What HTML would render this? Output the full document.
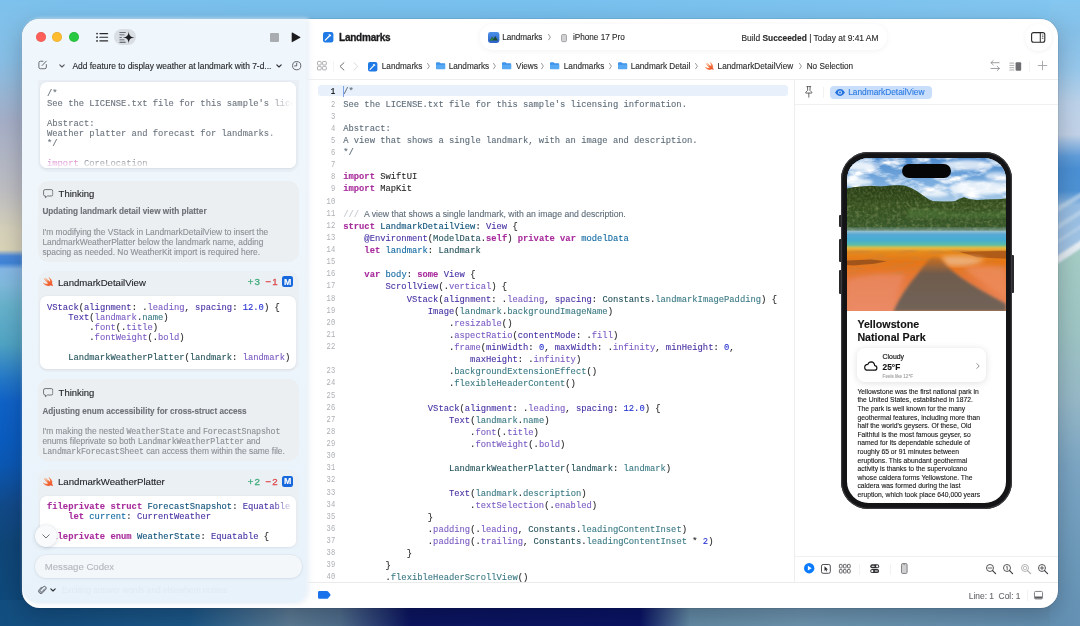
<!DOCTYPE html>
<html>
<head>
<meta charset="utf-8">
<title>Xcode</title>
<style>
*{box-sizing:border-box;margin:0;padding:0}
html,body{width:1080px;height:626px;overflow:hidden;background:#6aa0c8}
body{position:relative;font-family:"Liberation Sans",sans-serif;color:#1d1d1f;font-size:8.3px}
.a{position:absolute}
.t{position:absolute;white-space:pre;line-height:12px;-webkit-text-stroke:.12px}
.m{font-family:"Liberation Mono",monospace}
svg{position:absolute;overflow:visible}
/* wallpaper */
#bg{left:0;top:0;width:1080px;height:626px;
 background:
  linear-gradient(to right, rgba(18,78,128,1) 0px, rgba(28,88,136,1) 190px, rgba(92,124,148,1) 290px, rgba(80,110,140,1) 340px, rgba(12,22,96,1) 410px, rgba(10,20,100,1) 640px, rgba(100,140,165,1) 690px, rgba(110,150,175,1) 800px, rgba(98,143,176,1) 1080px) 0 600px/1080px 26px no-repeat,
  linear-gradient(to bottom, #7cc1ec 0px, #88bfe6 60px, #a5afc8 120px, #bebec3 190px, #d6d1ba 230px, #d9d3b8 250px, #4a88da 256px, #3f84d8 263px, #86b8e6 269px, #7fb9dc 285px, #68b2cc 305px, #50a4c4 344px, #2478c8 379px, #1062c8 402px, #0a5cc0 440px, #0b58b4 465px, #124a8a 505px, #0f4678 545px, #0e4a7c 626px) 0 0/30px 626px no-repeat,
  linear-gradient(to right, #7cc1ec 0px, #78c0ee 540px, #82c6f0 1080px) 0 0/1080px 30px no-repeat;
}
#win{left:22px;top:18.5px;width:1036px;height:589px;border-radius:17.5px;background:#fff;box-shadow:0 0 0 0.5px rgba(0,0,0,.12),0 8px 24px rgba(0,0,20,.25)}
#side{left:22px;top:18.5px;width:284px;height:584.5px;border-radius:17.5px 0 13px 16px;background:linear-gradient(to bottom,#f0f7fc 0,#eef6fc 40%,#e8f2fa 100%);box-shadow:2px 0 4px #eaf2f9, 3px 1px 7px rgba(120,150,180,.10)}
.hl{background:#e6e6e6}
.vl{background:#e6e6e6}
.card{border-radius:9px}
.jb{top:61.1px;font-size:8.2px;color:#2c2c2e}
.jc{top:62.9px;width:3px;height:6.4px}
.fo{top:62.3px;width:9.4px;height:7.6px}
.sw{width:9px;height:8.2px}
pre.sc{position:absolute;-webkit-text-stroke:.1px;font-size:8.82px;line-height:10.05px;white-space:pre;color:#262626}
pre i,pre b{font-style:normal}
.tb{width:10.4px;height:9.5px;margin-top:.7px}
.th{font-size:8.4px;line-height:10px;color:#8d9095}
.tm{font-size:8.3px;letter-spacing:-.15px;line-height:1px}
.k{color:#a82b9c;font-weight:bold}
.p1{color:#4631a3}.p2{color:#7a5ac3}.g1{color:#23525a}.g2{color:#3a7a84}.n{color:#2430d0}.d1{color:#0b4f79}.d2{color:#0f68a0}.c{color:#5d6c79}
pre.ln{left:313px;top:86.45px;width:22.2px;text-align:right;font-size:8.5px;line-height:12.125px;color:#adafb3;transform:scaleX(.84);transform-origin:right center}
pre.ln .cur{color:#1d1d1f;font-size:8.8px;font-weight:bold}
pre.cd{-webkit-text-stroke:.1px;left:343.2px;top:86.45px;font-size:8.82px;line-height:12.125px;color:#262626;white-space:pre}
.dc{font-family:"Liberation Sans",sans-serif;font-size:8.7px;color:#5d6c79;padding-left:3px}
.zm{top:563.8px;width:10.4px;height:10.4px}
</style>
</head>
<body>
<div id="root" style="position:absolute;left:0;top:0;width:1080px;height:626px;will-change:transform">
<div id="bg" class="a"></div>
<svg style="left:1050px;top:0" width="30" height="626" viewBox="0 0 30 626">
<defs><linearGradient id="rg" gradientUnits="userSpaceOnUse" x1="0" y1="0" x2="0" y2="626"><stop offset="0" stop-color="#84c7f0"/><stop offset=".05" stop-color="#86c0e8"/><stop offset=".11" stop-color="#97c8ec"/><stop offset=".165" stop-color="#bdd3ea"/><stop offset=".215" stop-color="#c3d3e8"/><stop offset=".25" stop-color="#5f9dda"/><stop offset=".27" stop-color="#4b90d5"/><stop offset=".305" stop-color="#4e93d6"/><stop offset=".328" stop-color="#96bde3"/><stop offset=".4" stop-color="#a4c6e6"/><stop offset="1" stop-color="#a4c6e6"/></linearGradient>
<linearGradient id="rt" gradientUnits="userSpaceOnUse" x1="0" y1="250" x2="0" y2="626"><stop offset="0" stop-color="#a6cdc6"/><stop offset=".2" stop-color="#9fc6c4"/><stop offset=".4" stop-color="#96b9c8"/><stop offset=".58" stop-color="#7ba6c4"/><stop offset=".8" stop-color="#6e9bbb"/><stop offset="1" stop-color="#6491b4"/></linearGradient>
<filter id="rb"><feGaussianBlur stdDeviation="2.2"/></filter><filter id="rb2"><feGaussianBlur stdDeviation=".8"/></filter></defs>
<rect width="30" height="626" fill="url(#rg)"/>
<polygon points="-5,214 35,190 35,195 -5,220" fill="#d2e3f1" opacity=".55" filter="url(#rb2)"/>
<polygon points="-5,232 35,207 35,212 -5,238" fill="#d2e3f1" opacity=".5" filter="url(#rb2)"/>
<polygon points="-5,248 35,222 35,226 -5,252" fill="#d2e3f1" opacity=".4" filter="url(#rb2)"/>
<polygon points="0,268 30,248 30,626 0,626" fill="url(#rt)"/>
<polygon points="-2,262 32,239.5 32,247.5 -2,270" fill="#e6eef3" filter="url(#rb2)"/>
</svg>
<div id="win" class="a"></div>
<div id="side" class="a"></div>

<!-- separators -->
<div class="a hl" style="left:308px;top:78.6px;width:750px;height:1px;background:#eeeeee"></div>
<div class="a vl" style="left:794.3px;top:79px;width:1px;height:503px;background:#eeeeee"></div>
<div class="a hl" style="left:795px;top:104px;width:263px;height:1px;background:#f0f0f0"></div>
<div class="a hl" style="left:795px;top:556px;width:263px;height:1px;background:#f0f0f0"></div>
<div class="a hl" style="left:308px;top:581.6px;width:750px;height:1px;background:#ebebeb"></div>

<svg width="0" height="0" style="left:0;top:0"><defs>
<symbol id="fold" viewBox="0 0 10 8"><path d="M0 1.3Q0 .2 1.1 .2H3.4Q4 .2 4.4 .7L5 1.3H8.9Q10 1.3 10 2.4V6.7Q10 7.8 8.9 7.8H1.1Q0 7.8 0 6.7Z" fill="#3d93ea"/><path d="M0 3H10V6.7Q10 7.8 8.9 7.8H1.1Q0 7.8 0 6.7Z" fill="#58a9f3"/></symbol>
<symbol id="swift" viewBox="0 0 10 9"><linearGradient id="sg" x1="0" y1="0" x2="1" y2="1"><stop offset="0" stop-color="#f9a868"/><stop offset=".55" stop-color="#f26b35"/><stop offset="1" stop-color="#ec4a28"/></linearGradient><path d="M5.5 .3C8.1 1.9 9.3 4.5 8.5 6.4C9.2 7.2 9.4 8.1 9.2 8.8C8.6 7.8 7.8 7.7 7.2 8C5 9.2 2 8.4 .2 5.6C1.9 6.8 3.8 7.1 5.2 6.3C3.4 4.9 2 3.1 1 1.5C2.5 2.9 3.9 3.9 5.1 4.6C4.1 3.5 3 2.1 2.4 1C3.9 2.5 5.6 3.9 6.9 4.7C7.2 3.4 6.8 1.8 5.5 .3Z" fill="url(#sg)" stroke="url(#sg)" stroke-width=".35" stroke-linejoin="round"/></symbol>
<symbol id="bub" viewBox="0 0 11 10"><path d="M2.2 .6H8.8Q10.4 .6 10.4 2.2V5.8Q10.4 7.4 8.8 7.4H4.6L2.6 9.3V7.4H2.2Q.6 7.4 .6 5.8V2.2Q.6 .6 2.2 .6Z" fill="none" stroke="#55585e" stroke-width=".85" stroke-linejoin="round"/></symbol>
<symbol id="zo" viewBox="0 0 10.4 10.4"><circle cx="4" cy="4" r="3.5" fill="none" stroke="#3a3a3e" stroke-width=".85"/><path d="M6.6 6.6L9.8 9.8" stroke="#3a3a3e" stroke-width="1.15" stroke-linecap="round"/></symbol>
<symbol id="chv" viewBox="0 0 3 6.4"><path d="M.5 .4 L2.4 3.2 L.5 6" fill="none" stroke="#6c6c70" stroke-width=".7" stroke-linecap="round" stroke-linejoin="round"/></symbol>
</defs></svg>
<!-- traffic lights -->
<div class="a" style="left:35.8px;top:32.3px;width:10px;height:10px;border-radius:50%;background:#fe5f58;box-shadow:inset 0 0 0 .4px rgba(0,0,0,.12)"></div>
<div class="a" style="left:52.2px;top:32.3px;width:10px;height:10px;border-radius:50%;background:#febc2e;box-shadow:inset 0 0 0 .4px rgba(0,0,0,.12)"></div>
<div class="a" style="left:68.6px;top:32.3px;width:10px;height:10px;border-radius:50%;background:#28c840;box-shadow:inset 0 0 0 .4px rgba(0,0,0,.12)"></div>
<!-- list icon -->
<svg style="left:95.6px;top:32px" width="13" height="11" viewBox="0 0 13 11"><g fill="#2a2a2c"><circle cx="1.05" cy="1.6" r=".9"/><circle cx="1.05" cy="5.25" r=".9"/><circle cx="1.05" cy="8.9" r=".9"/><rect x="3.3" y="1" width="8.9" height="1.2" rx=".6"/><rect x="3.3" y="4.65" width="8.9" height="1.2" rx=".6"/><rect x="3.3" y="8.3" width="8.9" height="1.2" rx=".6"/></g></svg>
<!-- sparkle pill -->
<div class="a" style="left:113.6px;top:28.8px;width:22.6px;height:16.6px;border-radius:8.3px;background:#d9dee5"></div>
<svg style="left:113.6px;top:28.8px" width="22.6" height="16.6" viewBox="0 0 22.6 16.6"><g fill="#4a4d54"><rect x="5.30" y="3.20" width="6.50" height=".85" rx=".4"/><rect x="5.30" y="5.50" width="5.30" height=".85" rx=".4"/><rect x="5.30" y="8.00" width="2.70" height=".85" rx=".4"/><rect x="5.30" y="10.50" width="5.30" height=".85" rx=".4"/><rect x="5.30" y="12.80" width="6.50" height=".85" rx=".4"/></g><path d="M14.700000000000017 2.200000000000002 C15.050000000000017 6.560000000000002 16.310000000000016 8.050000000000002 20.600000000000016 8.400000000000002 C16.310000000000016 8.750000000000002 15.050000000000017 10.240000000000002 14.700000000000017 14.600000000000001 C14.350000000000017 10.240000000000002 13.090000000000018 8.750000000000002 8.800000000000017 8.400000000000002 C13.090000000000018 8.050000000000002 14.350000000000017 6.560000000000002 14.700000000000017 2.200000000000002Z" fill="#1e1f23"/></svg>
<!-- stop / play -->
<div class="a" style="left:270px;top:32.6px;width:9px;height:9px;border-radius:1px;background:#a9adb1"></div>
<svg style="left:290.6px;top:31.8px" width="10" height="11" viewBox="0 0 10 11"><path d="M.7 .9 Q.7 .2 1.4 .55 L9.2 4.9 Q9.8 5.3 9.2 5.7 L1.4 10.05 Q.7 10.4 .7 9.7Z" fill="#1c1c1e"/></svg>
<!-- project icon + title -->
<svg style="left:323.4px;top:32.2px" width="10.4" height="10.4" viewBox="0 0 10.4 10.4"><rect width="10.4" height="10.4" rx="2.2" fill="#1f7ae6"/><path d="M2.3 8.1 L6.6 3.8" stroke="#fff" stroke-width="1.3" stroke-linecap="round"/><path d="M5.2 2.6 Q6.8 1.6 8.3 3.6 L7.5 4.4 L6 3z" fill="#fff"/></svg>
<div class="t" style="left:339px;top:31.7px;font-size:10px;letter-spacing:-.22px;font-weight:bold;color:#1a1a1c;-webkit-text-stroke:.3px #1a1a1c">Landmarks</div>
<!-- scheme pill -->
<div class="a" style="left:480px;top:23.8px;width:407px;height:26.6px;border-radius:13.3px;background:#fff;box-shadow:0 1px 6px rgba(0,0,0,.055)"></div>
<svg style="left:487.6px;top:32px" width="11.4" height="11" viewBox="0 0 11.2 10.6"><defs><linearGradient id="ag" x1="0" y1="0" x2="0" y2="1"><stop offset="0" stop-color="#4a90e8"/><stop offset="1" stop-color="#2d63c8"/></linearGradient></defs><rect width="11.2" height="10.6" rx="2.4" fill="url(#ag)"/><path d="M1.6 8.2 L4.2 4.6 L5.6 6.2 L7.2 3.9 L9.8 8.2Z" fill="#1d4a3a"/><path d="M1.6 8.2 L4.2 4.6 L5.6 6.2 L4.6 8.2Z" fill="#2f7d4c"/></svg>
<div class="t" style="left:502.2px;top:32.2px;font-size:8.2px;letter-spacing:-.05px;color:#2a2a2c">Landmarks</div>
<svg class="jc" style="left:547.6px;top:34px"><use href="#chv"/></svg>
<svg style="left:561px;top:33.5px" width="6" height="8.2" viewBox="0 0 6 8.2"><rect x=".5" y=".5" width="5" height="7.2" rx="1.2" fill="#d2d2d5" stroke="#9a9a9e" stroke-width=".85"/></svg>
<div class="t" style="left:572.9px;top:32.2px;font-size:8.2px;color:#2a2a2c">iPhone 17 Pro</div>
<div class="t" id="bs" style="left:741.4px;top:31.8px;font-size:8.41px;color:#2a2a2c">Build <b>Succeeded</b> | Today at 9:41 AM</div>
<!-- inspector toggle -->
<div class="a" style="left:1024.5px;top:24px;width:27px;height:27px;border-radius:50%;background:#fff;box-shadow:0 1px 4px rgba(0,0,0,.06)"></div>
<svg style="left:1031px;top:32.2px" width="14.4" height="10.8" viewBox="0 0 14.4 10.8"><rect x=".6" y=".6" width="13.2" height="9.6" rx="2" fill="none" stroke="#2a2a2c" stroke-width="1.1"/><path d="M9.3 .6V10.2" stroke="#2a2a2c" stroke-width="1"/><path d="M10.9 3h1.5M10.9 4.7h1.5M10.9 6.4h1.5" stroke="#2a2a2c" stroke-width=".7"/></svg>

<!-- sidebar header row -->
<svg style="left:38px;top:60.1px" width="9.6" height="9.6" viewBox="0 0 10 10"><path d="M5.2 1.3H2.6Q.9 1.3 .9 3V7.4Q.9 9.1 2.6 9.1H7Q8.7 9.1 8.7 7.4V4.8" fill="none" stroke="#55575c" stroke-width=".9" stroke-linecap="round"/><path d="M4.3 5.7 L8.6 1.2" stroke="#55575c" stroke-width=".95" stroke-linecap="round"/></svg>
<svg style="left:58.8px;top:64.2px" width="6" height="4" viewBox="0 0 6 4"><path d="M.8 .8 L3 3 L5.2 .8" fill="none" stroke="#55575c" stroke-width="1.15" stroke-linecap="round" stroke-linejoin="round"/></svg>
<div class="t" style="left:72.4px;top:60.1px;font-size:8.44px;color:#26282c">Add feature to display weather at landmark with 7-d...</div>
<svg style="left:276px;top:64.4px" width="6" height="4" viewBox="0 0 6 4"><path d="M.8 .8 L3 3 L5.2 .8" fill="none" stroke="#2e3034" stroke-width="1.15" stroke-linecap="round" stroke-linejoin="round"/></svg>
<svg style="left:291.6px;top:60.9px" width="9.4" height="9.4" viewBox="0 0 9.4 9.4"><circle cx="4.7" cy="4.7" r="4.1" fill="none" stroke="#55575c" stroke-width=".9"/><path d="M4.7 2.2V4.9H2.6" fill="none" stroke="#55575c" stroke-width=".9" stroke-linecap="round" stroke-linejoin="round"/></svg>

<!-- jump bar -->
<svg style="left:316.8px;top:61.1px" width="10" height="9.6" viewBox="0 0 10 9.6"><g fill="none" stroke="#9a9a9e" stroke-width=".8"><rect x=".5" y=".5" width="3.7" height="3.5" rx=".7"/><rect x="5.6" y=".5" width="3.7" height="3.5" rx=".7"/><rect x=".5" y="5.4" width="3.7" height="3.5" rx=".7"/><rect x="5.6" y="5.4" width="3.7" height="3.5" rx=".7"/></g></svg>
<div class="a" style="left:332.6px;top:61px;width:1px;height:11px;background:#f3f3f4"></div>
<svg style="left:339px;top:62px" width="6" height="9" viewBox="0 0 6 9"><path d="M4.9 .8 L1 4.4 L4.9 8" fill="none" stroke="#6e6e72" stroke-width="1" stroke-linecap="round" stroke-linejoin="round"/></svg>
<svg style="left:353px;top:62px" width="6" height="9" viewBox="0 0 6 9"><path d="M1 .8 L4.9 4.4 L1 8" fill="none" stroke="#dcdcdf" stroke-width="1" stroke-linecap="round" stroke-linejoin="round"/></svg>
<svg style="left:368.2px;top:61.8px" width="9.4" height="9.4" viewBox="0 0 10.4 10.4"><rect width="10.4" height="10.4" rx="2.2" fill="#1f7ae6"/><path d="M2.3 8.1 L6.6 3.8" stroke="#fff" stroke-width="1.3" stroke-linecap="round"/><path d="M5.2 2.6 Q6.8 1.6 8.3 3.6 L7.5 4.4 L6 3z" fill="#fff"/></svg>
<div class="t jb" style="left:381.8px">Landmarks</div>
<svg class="jc" style="left:426.5px"><use href="#chv"/></svg>
<svg class="fo" style="left:435.6px"><use href="#fold"/></svg>
<div class="t jb" style="left:448.7px">Landmarks</div>
<svg class="jc" style="left:493.1px"><use href="#chv"/></svg>
<svg class="fo" style="left:502.4px"><use href="#fold"/></svg>
<div class="t jb" style="left:516.1px">Views</div>
<svg class="jc" style="left:541.1px"><use href="#chv"/></svg>
<svg class="fo" style="left:550.4px"><use href="#fold"/></svg>
<div class="t jb" style="left:563.8px">Landmarks</div>
<svg class="jc" style="left:608.5px"><use href="#chv"/></svg>
<svg class="fo" style="left:617.7px"><use href="#fold"/></svg>
<div class="t jb" style="left:630.7px">Landmark Detail</div>
<svg class="jc" style="left:695.4px"><use href="#chv"/></svg>
<svg class="sw" style="left:705.4px;top:62.2px"><use href="#swift"/></svg>
<div class="t jb" style="left:717.6px;letter-spacing:.04px">LandmarkDetailView</div>
<svg class="jc" style="left:798.5px"><use href="#chv"/></svg>
<div class="t jb" style="left:806.7px">No Selection</div>
<!-- right icons -->
<svg style="left:990px;top:60.3px" width="10.4" height="11.4" viewBox="0 0 10.4 11.4"><g fill="none" stroke="#8e8e92" stroke-width=".85" stroke-linecap="round" stroke-linejoin="round"><path d="M9.2 2.7H1M3.2 .6 L1 2.7 L3.2 4.8"/><path d="M1 8.5H9.4M7.2 6.4 L9.4 8.5 L7.2 10.6"/></g></svg>
<svg style="left:1009.4px;top:61.6px" width="12.4" height="9" viewBox="0 0 12.4 9"><path d="M.4 1.1H5.2M.4 3.4H5.2M.4 5.7H5.2M.4 8H5.2" stroke="#9a9a9e" stroke-width=".8"/><rect x="6.6" y=".3" width="5.6" height="8.4" rx="1" fill="#6e6e72"/></svg>
<div class="a" style="left:1029px;top:61px;width:1px;height:11px;background:#f3f3f4"></div>
<svg style="left:1037.7px;top:61.3px" width="9" height="9" viewBox="0 0 9 9"><path d="M4.5 .2V8.8M.2 4.5H8.8" stroke="#96969a" stroke-width=".8" stroke-linecap="round"/></svg>

<!--/TOOLBAR-->
<!--SIDEBAR-->
<!-- card 1: code preview -->
<div class="a" style="left:37.5px;top:79.6px;width:261.5px;height:92px;border-radius:0 0 10px 10px;background:#e9eff5"></div>
<div class="a" style="left:40.3px;top:82px;width:256px;height:86.4px;border-radius:7px;background:#fff;box-shadow:0 .5px 2px rgba(80,100,130,.12);overflow:hidden">
<pre class="m sc" style="left:6.7px;top:6.85px;line-height:10px;color:#6b737d">/*
See the LICENSE.txt file for this sample's license

Abstract:
Weather platter and forecast for landmarks.
*/

<span style="color:#cf5fc0">import</span> CoreLocation
<span style="color:#d06bc4">import</span> SwiftUI</pre>
<div class="a" style="left:0;top:72px;width:256px;height:15px;background:linear-gradient(to bottom,rgba(255,255,255,0),rgba(255,255,255,.2) 40%,rgba(255,255,255,.8) 82%,#fff 100%)"></div>
<div class="a" style="left:226px;top:0;width:30px;height:87px;background:linear-gradient(to right,rgba(255,255,255,0),#fff 90%)"></div>
</div>

<!-- thinking 1 -->
<div class="a card" style="left:37.5px;top:180.6px;width:261.5px;height:81px;border-radius:10px;background:#ebeff2"></div>
<svg class="tb" style="left:43px;top:188.4px"><use href="#bub"/></svg>
<div class="t" style="left:58.6px;top:188.1px;font-size:9.47px;color:#1f2023">Thinking</div>
<div class="t" style="left:42.4px;top:206.3px;font-size:8.2px;color:#6f7277;font-weight:bold;letter-spacing:.01px">Updating landmark detail view with platter</div>
<div class="t th" style="left:42.4px;top:226.5px">I'm modifying the VStack in LandmarkDetailView to insert the
LandmarkWeatherPlatter below the landmark name, adding
spacing as needed. No WeatherKit import is required here.</div>

<!-- card 3 -->
<div class="a card" style="left:37.5px;top:271px;width:261.5px;height:101px;border-radius:10px;background:#ebf0f5"></div>
<svg class="sw" style="left:43.2px;top:277.3px;width:10.4px;height:9.4px"><use href="#swift"/></svg>
<div class="t" style="left:58px;top:276.6px;font-size:9.61px;color:#1f2023">LandmarkDetailView</div>
<div class="t" style="left:247.8px;top:276.4px;font-size:9.7px;letter-spacing:1.1px;color:#3dab79;-webkit-text-stroke:.3px #3dab79">+3</div>
<div class="t" style="left:265.6px;top:276.4px;font-size:9.7px;letter-spacing:.9px;color:#dc4b4f;-webkit-text-stroke:.3px #dc4b4f">&#x2212;1</div>
<div class="a" style="left:282.2px;top:276.3px;width:10.8px;height:11.2px;border-radius:2.3px;background:#1668dc"></div>
<div class="t" style="left:284px;top:276px;font-size:8.8px;font-weight:bold;color:#fff">M</div>
<div class="a" style="left:40.3px;top:296.3px;width:256px;height:72.4px;border-radius:7px;background:#fff;box-shadow:0 .5px 2px rgba(80,100,130,.12);overflow:hidden">
<pre class="m sc" style="left:6.7px;top:6.5px"><i class="p1">VStack</i>(<i class="p1">alignment</i>: .<i class="p2">leading</i>, <i class="p1">spacing</i>: <i class="n">12.0</i>) {
    <i class="p1">Text</i>(<i class="p2">landmark</i>.<i class="g2">name</i>)
        .<i class="p2">font</i>(.<i class="p2">title</i>)
        .<i class="p2">fontWeight</i>(.<i class="p2">bold</i>)

    <i class="g1">LandmarkWeatherPlatter</i>(<i class="g1">landmark</i>: <i class="p2">landmark</i>)</pre>
</div>

<!-- thinking 2 -->
<div class="a card" style="left:37.5px;top:379.4px;width:261.5px;height:81.6px;border-radius:10px;background:#ebeff2"></div>
<svg class="tb" style="left:43px;top:387.5px"><use href="#bub"/></svg>
<div class="t" style="left:58.6px;top:387.2px;font-size:9.47px;color:#1f2023">Thinking</div>
<div class="t" style="left:42.4px;top:405.5px;font-size:8.13px;color:#6f7277;font-weight:bold;letter-spacing:.01px">Adjusting enum accessibility for cross-struct access</div>
<div class="t th" style="left:42.4px;top:425.6px">I'm making the nested <span class="m tm">WeatherState</span> and <span class="m tm">ForecastSnapshot</span>
enums fileprivate so both <span class="m tm">LandmarkWeatherPlatter</span> and
<span class="m tm">LandmarkForecastSheet</span> can access them within the same file.</div>

<!-- card 5 -->
<div class="a card" style="left:37.5px;top:470.4px;width:261.5px;height:82px;border-radius:10px 10px 0 0;background:linear-gradient(to bottom,#ebf0f5 0,#ebf0f5 70px,#e9f3fa 80px)"></div>
<svg class="sw" style="left:43.2px;top:476.7px;width:10.4px;height:9.4px"><use href="#swift"/></svg>
<div class="t" style="left:58px;top:476px;font-size:9.64px;color:#1f2023">LandmarkWeatherPlatter</div>
<div class="t" style="left:247.8px;top:475.8px;font-size:9.7px;letter-spacing:1.1px;color:#3dab79;-webkit-text-stroke:.3px #3dab79">+2</div>
<div class="t" style="left:265.6px;top:475.8px;font-size:9.7px;letter-spacing:.9px;color:#dc4b4f;-webkit-text-stroke:.3px #dc4b4f">&#x2212;2</div>
<div class="a" style="left:282.2px;top:475.7px;width:10.8px;height:11.2px;border-radius:2.3px;background:#1668dc"></div>
<div class="t" style="left:284px;top:475.4px;font-size:8.8px;font-weight:bold;color:#fff">M</div>
<div class="a" style="left:40.3px;top:495.6px;width:256px;height:51.6px;border-radius:7px;background:#fff;box-shadow:0 .5px 2px rgba(80,100,130,.12);overflow:hidden">
<pre class="m sc" style="left:6.7px;top:6.1px;line-height:10.1px"><b class="k">fileprivate</b> <b class="k">struct</b> <i class="d1">ForecastSnapshot</i>: <i class="p1">Equatable</i>
    <b class="k">let</b> <i class="d2">current</i>: <i class="p1">CurrentWeather</i>

<b class="k">fileprivate</b> <b class="k">enum</b> <i class="d1">WeatherState</i>: <i class="p1">Equatable</i> {</pre>
<div class="a" style="left:232px;top:0;width:24px;height:52px;background:linear-gradient(to right,rgba(255,255,255,0),#fff 95%)"></div>
</div>
<!-- scroll-down button -->
<div class="a" style="left:35.2px;top:525.4px;width:21.6px;height:21.6px;border-radius:50%;background:#f8fafc;box-shadow:0 0 0 .5px rgba(0,0,0,.05),0 1px 4px rgba(40,60,90,.15)"></div>
<svg style="left:42.2px;top:533.8px" width="8" height="5" viewBox="0 0 8 5"><path d="M.8 .8 L4 4 L7.2 .8" fill="none" stroke="#6f7277" stroke-width="1" stroke-linecap="round" stroke-linejoin="round"/></svg>

<!-- message input -->
<div class="a" style="left:35px;top:555.2px;width:267px;height:22.6px;border-radius:11.3px;background:#f4f7fa;box-shadow:0 0 0 .6px rgba(150,165,185,.16),0 1px 3px rgba(60,80,110,.09)"></div>
<div class="t" style="left:44.8px;top:560.6px;font-size:9.6px;color:#b3b8bf">Message Codex</div>
<!-- paperclip -->
<svg style="left:37.3px;top:584px" width="10.4" height="11.6" viewBox="0 0 10.4 11.6"><g transform="translate(5.3,5.7) rotate(42) scale(.8) translate(-3.1,-6.1)"><path d="M4.6 3.4V8.4a1.5 1.5 0 0 1-3 0V2.9a2.2 2.2 0 0 1 4.4 0V8.6a2.9 2.9 0 0 1-5.8 0V4.4" fill="none" stroke="#4d5056" stroke-width="1.05" stroke-linecap="round"/></g></svg>
<svg style="left:49.8px;top:588.2px" width="6" height="4" viewBox="0 0 6 4"><path d="M.8 .8 L3 3 L5.2 .8" fill="none" stroke="#2e3034" stroke-width="1.15" stroke-linecap="round" stroke-linejoin="round"/></svg>
<div class="t" style="left:62px;top:584.4px;font-size:8.3px;color:#e1ebf4">Exciting answer words and elsewhere noises</div>

<!--/SIDEBAR-->
<!--EDITOR-->
<!-- current line highlight -->
<div class="a" style="left:318.4px;top:85.3px;width:470px;height:11.2px;border-radius:3.5px;background:#e7f0fb"></div>
<div class="a" style="left:342.9px;top:86px;width:1px;height:10.6px;background:#7da4e8"></div>
<pre class="m a ln"><b class="cur">1</b>
2
3
4
5
6
7
8
9
10
11
12
13
14
15
16
17
18
19
20
21
22

23
24
25
26
27
28
29
30
31
32
33
34
35
36
37
38
39
40</pre>
<pre class="m a cd"><i class="c">/*</i>
<i class="c">See the LICENSE.txt file for this sample's licensing information.</i>

<i class="c">Abstract:</i>
<i class="c">A view that shows a single landmark, with an image and description.</i>
<i class="c">*/</i>

<b class="k">import</b> SwiftUI
<b class="k">import</b> MapKit

<i class="c" style="color:#c3c9cf">///</i><span class="dc"> A view that shows a single landmark, with an image and description.</span>
<b class="k">struct</b> <i class="d1">LandmarkDetailView</i>: <i class="p1">View</i> {
    <i class="p1">@Environment</i>(<i class="g1">ModelData</i>.<b class="k">self</b>) <b class="k">private</b> <b class="k">var</b> <i class="d2">modelData</i>
    <b class="k">let</b> <i class="d2">landmark</i>: <i class="g1">Landmark</i>

    <b class="k">var</b> <i class="d2">body</i>: <b class="k">some</b> <i class="p1">View</i> {
        <i class="p1">ScrollView</i>(.<i class="p2">vertical</i>) {
            <i class="p1">VStack</i>(<i class="p1">alignment</i>: .<i class="p2">leading</i>, <i class="p1">spacing</i>: <i class="g1">Constants</i>.<i class="g2">landmarkImagePadding</i>) {
                <i class="p1">Image</i>(<i class="g2">landmark</i>.<i class="g2">backgroundImageName</i>)
                    .<i class="p2">resizable</i>()
                    .<i class="p2">aspectRatio</i>(<i class="p1">contentMode</i>: .<i class="p2">fill</i>)
                    .<i class="p2">frame</i>(<i class="p1">minWidth</i>: <i class="n">0</i>, <i class="p1">maxWidth</i>: .<i class="p2">infinity</i>, <i class="p1">minHeight</i>: <i class="n">0</i>,
                        <i class="p1">maxHeight</i>: .<i class="p2">infinity</i>)
                    .<i class="g2">backgroundExtensionEffect</i>()
                    .<i class="g2">flexibleHeaderContent</i>()

                <i class="p1">VStack</i>(<i class="p1">alignment</i>: .<i class="p2">leading</i>, <i class="p1">spacing</i>: <i class="n">12.0</i>) {
                    <i class="p1">Text</i>(<i class="g2">landmark</i>.<i class="g2">name</i>)
                        .<i class="p2">font</i>(.<i class="p2">title</i>)
                        .<i class="p2">fontWeight</i>(.<i class="p2">bold</i>)

                    <i class="g1">LandmarkWeatherPlatter</i>(<i class="g1">landmark</i>: <i class="g2">landmark</i>)

                    <i class="p1">Text</i>(<i class="g2">landmark</i>.<i class="g2">description</i>)
                        .<i class="p2">textSelection</i>(.<i class="p2">enabled</i>)
                }
                .<i class="p2">padding</i>(.<i class="p2">leading</i>, <i class="g1">Constants</i>.<i class="g2">leadingContentInset</i>)
                .<i class="p2">padding</i>(.<i class="p2">trailing</i>, <i class="g1">Constants</i>.<i class="g2">leadingContentInset</i> * <i class="n">2</i>)
            }
        }
        .<i class="g2">flexibleHeaderScrollView</i>()</pre>
<!-- bottom tag -->
<svg style="left:318px;top:591.4px" width="12.6" height="7.8" viewBox="0 0 12.6 7.8"><path d="M1.4 0H8.9Q9.6 0 10.1 .5L12.3 3.2Q12.8 3.9 12.3 4.6L10.1 7.3Q9.6 7.8 8.9 7.8H1.4Q0 7.8 0 6.4V1.4Q0 0 1.4 0Z" fill="#1a73ea"/></svg>

<!--/EDITOR-->
<!--PREVIEW-->
<!-- preview header -->
<svg style="left:805.2px;top:86.2px" width="7.6" height="11.8" viewBox="0 0 7.6 11.8"><g fill="none" stroke="#505054" stroke-width=".85" stroke-linejoin="round" stroke-linecap="round"><path d="M1.9 .6H5.7M2.4 .6L2.7 4.3L.8 6.2V7.1H6.8V6.2L4.9 4.3L5.2 .6"/><path d="M3.8 7.1V11.2"/></g></svg>
<div class="a" style="left:823.4px;top:86.5px;width:1px;height:11px;background:#f2f2f3"></div>
<div class="a" style="left:830.2px;top:85.5px;width:101.6px;height:13.9px;border-radius:4px;background:#c9defa"></div>
<svg style="left:834.9px;top:88.9px" width="10" height="7" viewBox="0 0 10 7"><path d="M.1 3.5Q2.1 .1 5 .1Q7.9 .1 9.9 3.5Q7.9 6.9 5 6.9Q2.1 6.9 .1 3.5Z" fill="#2474e0"/><circle cx="5" cy="3.5" r="2" fill="#c9defa"/><circle cx="5" cy="3.5" r="1.05" fill="#2474e0"/></svg>
<div class="t" style="left:848.2px;top:86.3px;font-size:8.33px;color:#2a7be4">LandmarkDetailView</div>

<!-- phone -->
<div class="a" style="left:838.6px;top:214.5px;width:3px;height:12px;border-radius:1px;background:#2a2a2c"></div>
<div class="a" style="left:838.6px;top:238.6px;width:3px;height:23px;border-radius:1px;background:#2a2a2c"></div>
<div class="a" style="left:838.6px;top:270.4px;width:3px;height:24px;border-radius:1px;background:#2a2a2c"></div>
<div class="a" style="left:1011.4px;top:255.3px;width:3px;height:38px;border-radius:1px;background:#2a2a2c"></div>
<div class="a" style="left:841.2px;top:152px;width:170.6px;height:357.2px;border-radius:27px;background:#141416;box-shadow:inset 0 0 0 1.2px #3a3a3e"></div>
<div class="a" id="scr" style="left:847px;top:157.6px;width:159px;height:345.4px;border-radius:21.5px;background:#fff;overflow:hidden">
<svg style="left:0;top:0;overflow:hidden" width="159" height="153.4" viewBox="0 0 159 153.6" preserveAspectRatio="none">
<defs>
<linearGradient id="sky" x1="0" y1="0" x2="0" y2="1"><stop offset="0" stop-color="#4f8ccf"/><stop offset=".55" stop-color="#7fb0e0"/><stop offset="1" stop-color="#b9d4ea"/></linearGradient>
<linearGradient id="wat" x1="0" y1="0" x2="0" y2="1"><stop offset="0" stop-color="#9cc3cc"/><stop offset=".22" stop-color="#58a9d6"/><stop offset=".55" stop-color="#45add0"/><stop offset=".8" stop-color="#5cbcaa"/><stop offset=".92" stop-color="#a9bf6a"/><stop offset="1" stop-color="#e3be48"/></linearGradient>
<linearGradient id="grd" x1="0" y1="0" x2="0" y2="1"><stop offset="0" stop-color="#e6ba44"/><stop offset=".025" stop-color="#e8ac3a"/><stop offset=".065" stop-color="#e58a1c"/><stop offset=".22" stop-color="#e67615"/><stop offset=".5" stop-color="#e6783a"/><stop offset="1" stop-color="#ec8a62"/></linearGradient>
<linearGradient id="str" x1="0" y1="0" x2="0" y2="1"><stop offset="0" stop-color="#8a5a36" stop-opacity=".3"/><stop offset=".3" stop-color="#6f5b4c"/><stop offset="1" stop-color="#716358"/></linearGradient>
<linearGradient id="hill" x1="0" y1="0" x2="0" y2="1"><stop offset="0" stop-color="#2a3d16"/><stop offset=".45" stop-color="#35501e"/><stop offset=".85" stop-color="#33562a"/><stop offset="1" stop-color="#2c4f30"/></linearGradient>
<filter id="bl"><feGaussianBlur stdDeviation="1.4"/></filter>
<filter id="bl2"><feGaussianBlur stdDeviation="2.4"/></filter>
<filter id="bl3"><feGaussianBlur stdDeviation=".5"/></filter>
<filter id="cl" x="0" y="0" width="100%" height="100%"><feTurbulence type="fractalNoise" baseFrequency=".045 .11" numOctaves="4" seed="7"/><feColorMatrix values="0 0 0 0 1  0 0 0 0 1  0 0 0 0 1  3.2 0 0 0 -1.4"/></filter>
<filter id="tr" x="0" y="0" width="100%" height="100%"><feTurbulence type="fractalNoise" baseFrequency=".5 .35" numOctaves="2" seed="3"/><feColorMatrix values="0 0 0 0 .07  0 0 0 0 .12  0 0 0 0 .03  2.6 0 0 0 -1.0"/><feComposite in2="SourceGraphic" operator="in"/></filter>
<filter id="tl" x="0" y="0" width="100%" height="100%"><feTurbulence type="fractalNoise" baseFrequency=".22 .3" numOctaves="2" seed="11"/><feColorMatrix values="0 0 0 0 .42  0 0 0 0 .5  0 0 0 0 .22  0 2.2 0 0 -1.05"/><feComposite in2="SourceGraphic" operator="in"/></filter>
<filter id="gr" x="0" y="0" width="100%" height="100%"><feTurbulence type="fractalNoise" baseFrequency=".05 .25" numOctaves="3" seed="5"/><feColorMatrix values="0 0 0 0 .55  0 0 0 0 .22  0 0 0 0 .05  2.4 0 0 0 -1.05"/><feComposite in2="SourceGraphic" operator="in"/></filter>
<clipPath id="hc"><path id="hp" d="M0 30.5 L6 29.4 L14 28.6 L24 27.8 L34 28.6 L44 27.6 L52 27.4 L58 27.8 L64 30 L70 33.4 L76 37.6 L82 41.6 L86 43.2 L94 43.6 L102 43.6 L108 43.2 L112 41 L117 39.4 L122 41 L130 42 L140 41.6 L150 41.2 L159 40.6 V76 H0Z"/></clipPath>
</defs>
<rect width="159" height="50" fill="url(#sky)"/>
<rect width="159" height="48" fill="#fff" filter="url(#cl)"/>
<g fill="#fff" filter="url(#bl)">
<ellipse cx="14" cy="8" rx="14" ry="5" opacity=".85"/><ellipse cx="10" cy="24" rx="16" ry="3.4" opacity=".8"/><ellipse cx="120" cy="7" rx="26" ry="5" opacity=".75"/><ellipse cx="132" cy="30" rx="30" ry="7" opacity=".8"/><ellipse cx="88" cy="36" rx="14" ry="3" opacity=".75"/><ellipse cx="150" cy="18" rx="12" ry="4" opacity=".6"/>
</g>
<use href="#hp" fill="url(#hill)"/>
<g clip-path="url(#hc)">
<rect y="26" width="159" height="50" fill="#000" filter="url(#tr)"/>
<rect y="44" width="159" height="30" fill="#000" filter="url(#tl)" opacity=".42"/>
<path d="M60 52 Q80 49 100 53 T159 52 V60 H60Z" fill="#5a8a45" opacity=".35" filter="url(#bl)"/>
</g>
<rect x="-4" y="70" width="167" height="6" fill="#9dbfc4" opacity=".55" filter="url(#bl)"/>
<rect y="72.8" width="159" height="17.4" fill="url(#wat)"/>
<rect y="89.8" width="159" height="64" fill="url(#grd)"/>
<rect y="92" width="159" height="26" fill="#000" filter="url(#gr)" opacity=".55"/>
<path d="M0 102.6 L24 101.6 L40 103.4 L27 106 L6 107.6 L0 107.2Z" fill="#8a4a1a" opacity=".75" filter="url(#bl3)"/>
<path d="M112 94 L159 93 V101 L130 99.4Z" fill="#9c4c16" opacity=".7" filter="url(#bl3)"/>
<path d="M94 99 Q116 96 138 101 Q130 110 100 108Z" fill="#f2c49c" opacity=".7" filter="url(#bl2)"/>
<path d="M84 99.6 Q88 98.6 93 100 Q104 118 159 146 V153.6 H46 Q56 133 70 117 Q78 106 84 99.6Z" fill="url(#str)" filter="url(#bl)"/>
<path d="M0 122 Q28 114 58 117 Q50 134 44 153.6 H0Z" fill="#ea8a66" opacity=".75" filter="url(#bl2)"/>
<path d="M116 110 Q140 106 159 110 V140 Q134 126 116 110Z" fill="#ee8c5c" opacity=".8" filter="url(#bl2)"/>
</svg>

<div class="a" style="left:55px;top:6.2px;width:48.8px;height:14.2px;border-radius:7.1px;background:#060607"></div>
<div class="t" style="left:10.4px;top:160.6px;font-size:10.7px;line-height:13.1px;font-weight:bold;color:#111">Yellowstone
National Park</div>
<div class="a" style="left:10.4px;top:190.6px;width:128.4px;height:33.8px;border-radius:8px;background:#fff;box-shadow:0 1px 7px rgba(0,0,0,.13)"></div>
<svg style="left:16.6px;top:203px" width="13.6" height="10" viewBox="0 0 13.6 10"><path d="M3.6 9.2H10.4Q12.9 9.2 12.9 6.9Q12.9 4.8 10.7 4.6Q10.4 1 7.2 .8Q4.6 .8 3.9 3.4Q.7 3.5 .7 6.4Q.7 9.2 3.6 9.2Z" fill="none" stroke="#111" stroke-width="1.15" stroke-linejoin="round"/></svg>
<div class="t" style="left:35.6px;top:193.5px;font-size:6.9px;color:#111;-webkit-text-stroke:.15px #111">Cloudy</div>
<div class="t" style="left:35.6px;top:203.2px;font-size:8.3px;font-weight:bold;color:#111">25&#176;F</div>
<div class="t" style="left:35.6px;top:213px;font-size:4.6px;color:#a2a2a6">Feels like 12&#176;F</div>
<svg style="left:128.6px;top:205.4px" width="4" height="6" viewBox="0 0 4 6"><path d="M.8 .6 L3.2 3 L.8 5.4" fill="none" stroke="#77777b" stroke-width=".8" stroke-linecap="round" stroke-linejoin="round"/></svg>
<div class="t" id="desc" style="left:10.4px;top:230.2px;font-size:6.75px;line-height:8.61px;color:#161616;-webkit-text-stroke:.1px #161616">Yellowstone was the first national park in
the United States, established in 1872.
The park is well known for the many
geothermal features, including more than
half the world's geysers. Of these, Old
Faithful is the most famous geyser, so
named for its dependable schedule of
roughly 65 or 91 minutes between
eruptions. This abundant geothermal
activity is thanks to the supervolcano
whose caldera forms Yellowstone. The
caldera was formed during the last
eruption, which took place 640,000 years</div>
</div>

<!-- preview bottom toolbar -->
<svg style="left:803.8px;top:563.4px" width="10.4" height="10.4" viewBox="0 0 10.8 10.8"><circle cx="5.4" cy="5.4" r="5.4" fill="#0a7aff"/><path d="M4 2.9 L8 5.4 L4 7.9Z" fill="#fff"/></svg>
<svg style="left:821.2px;top:564.2px" width="9.8" height="9.8" viewBox="0 0 9.8 9.8"><rect x=".5" y=".5" width="8.8" height="8.8" rx="1.6" fill="none" stroke="#3a3a3e" stroke-width=".9"/><path d="M3.5 2.3 L3.5 7 L4.7 5.9 L5.5 7.6 L6.2 7.3 L5.4 5.6 L7 5.5Z" fill="#2a2a2e"/></svg>
<svg style="left:838.6px;top:564.4px" width="11.6" height="9.4" viewBox="0 0 11.6 9.4"><g fill="none" stroke="#4a4a4e" stroke-width=".8"><rect x=".4" y=".4" width="2.7" height="3.5" rx=".6"/><rect x="4.45" y=".4" width="2.7" height="3.5" rx=".6"/><rect x="8.5" y=".4" width="2.7" height="3.5" rx=".6"/><rect x=".4" y="5.5" width="2.7" height="3.5" rx=".6"/><rect x="4.45" y="5.5" width="2.7" height="3.5" rx=".6"/><rect x="8.5" y="5.5" width="2.7" height="3.5" rx=".6"/></g></svg>
<div class="a" style="left:859.2px;top:563.5px;width:1px;height:11px;background:#f2f2f3"></div>
<svg style="left:870px;top:564.1px" width="9.4" height="9.3" viewBox="0 0 10.4 10.2"><rect x=".3" y=".3" width="9.8" height="4.3" rx="2.1" fill="#2e2e32"/><rect x=".3" y="5.6" width="9.8" height="4.3" rx="2.1" fill="#2e2e32"/><circle cx="7.9" cy="2.45" r="1.25" fill="#fff"/><circle cx="2.5" cy="7.75" r="1.25" fill="#fff"/><rect x="1.6" y="1.95" width="3.6" height="1" rx=".5" fill="#fff"/><rect x="5.2" y="7.25" width="3.6" height="1" rx=".5" fill="#fff"/></svg>
<div class="a" style="left:889.8px;top:563.5px;width:1px;height:11px;background:#f2f2f3"></div>
<svg style="left:900.5px;top:563.2px" width="6.6" height="11" viewBox="0 0 6.6 11"><rect x=".5" y=".5" width="5.6" height="10" rx="1.3" fill="#cfcfd2" stroke="#77777b" stroke-width=".9"/><path d="M2.4 1.6H4.2" stroke="#77777b" stroke-width=".6"/></svg>
<svg class="zm" style="left:985.6px"><use href="#zo"/><path d="M2.2 4H5.8" stroke="#3a3a3e" stroke-width=".8" stroke-linecap="round"/></svg>
<svg class="zm" style="left:1003.2px"><use href="#zo"/><path d="M3.5 2.9L4.2 2.4V5.8" fill="none" stroke="#3a3a3e" stroke-width=".75" stroke-linecap="round" stroke-linejoin="round"/></svg>
<svg class="zm" style="left:1020.8px;opacity:.45"><use href="#zo"/><circle cx="4" cy="4" r="1.7" fill="none" stroke="#3a3a3e" stroke-width=".7"/></svg>
<svg class="zm" style="left:1038.2px"><use href="#zo"/><path d="M2.2 4H5.8M4 2.2V5.8" stroke="#3a3a3e" stroke-width=".8" stroke-linecap="round"/></svg>

<!-- status bar -->
<div class="t" style="left:968.8px;top:589.5px;font-size:8.38px;color:#6a6a6e">Line: 1  Col: 1</div>
<div class="a" style="left:1027px;top:590px;width:1px;height:11px;background:#f2f2f3"></div>
<svg style="left:1034px;top:591.2px" width="9" height="8.4" viewBox="0 0 9 8.4"><rect x=".45" y=".45" width="8.1" height="7.5" rx="1.1" fill="none" stroke="#77777b" stroke-width=".9"/><path d="M.9 5.5H8.1V7Q8.1 7.5 7.6 7.5H1.4Q.9 7.5 .9 7Z" fill="#5a5a5f"/></svg>

<!--/PREVIEW-->
</div>
</body>
</html>
